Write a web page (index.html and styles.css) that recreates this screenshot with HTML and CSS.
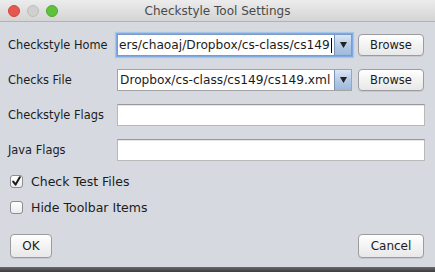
FILE: index.html
```html
<!DOCTYPE html>
<html>
<head>
<meta charset="utf-8">
<link rel="stylesheet" href="styles.css">
</head>
<body>
<div class="window">
  <div class="titlebar">
    <div class="lights">
      <span class="light red"></span>
      <span class="light gray"></span>
      <span class="light green"></span>
    </div>
    <div class="title">Checkstyle Tool Settings</div>
  </div>
  <div class="content">
    <div class="form">
      <div class="label">Checkstyle Home</div>
      <div class="combo focus">
        <div class="combo-text">ers/chaoaj/Dropbox/cs-class/cs149<span class="caret"></span></div>
        <div class="combo-arrow"><svg width="7" height="6" viewBox="0 0 7 6"><path d="M0 0 H7 L3.5 6 Z" fill="#222"/></svg></div>
      </div>
      <button class="btn browse">Browse</button>

      <div class="label">Checks File</div>
      <div class="combo">
        <div class="combo-text">Dropbox/cs-class/cs149/cs149.xml</div>
        <div class="combo-arrow"><svg width="7" height="6" viewBox="0 0 7 6"><path d="M0 0 H7 L3.5 6 Z" fill="#222"/></svg></div>
      </div>
      <button class="btn browse">Browse</button>

      <div class="label">Checkstyle Flags</div>
      <div class="field wide"></div>

      <div class="label">Java Flags</div>
      <div class="field wide"></div>
    </div>

    <div class="checks">
      <div class="check-row">
        <span class="box checked"><svg width="11" height="11" viewBox="0 0 11 11"><path d="M2.2 5.6 L4.6 8.6 L8.8 1.2" fill="none" stroke="#1a1a1a" stroke-width="2" stroke-linecap="round" stroke-linejoin="round"/></svg></span>
        <span class="check-text">Check Test Files</span>
      </div>
      <div class="check-row">
        <span class="box"></span>
        <span class="check-text">Hide Toolbar Items</span>
      </div>
    </div>

    <div class="actions">
      <button class="btn action ok">OK</button>
      <button class="btn action cancel">Cancel</button>
    </div>
  </div>
</div>
<div class="desk"></div>
</body>
</html>
```
FILE: styles.css
```css
html, body {
  margin: 0;
  padding: 0;
  background: #3c3c3e;
}
body {
  width: 435px;
  height: 272px;
  overflow: hidden;
  font-family: "DejaVu Sans", "Noto Sans", sans-serif;
  color: #1c1c1c;
}
.window {
  height: 267px;
  background: #d6d9e0;
  display: flex;
  flex-direction: column;
}
.titlebar {
  height: 21px;
  flex: none;
  background: linear-gradient(#ececec, #d4d4d4);
  border-bottom: 1px solid #b3b3b3;
  display: flex;
  align-items: center;
  position: relative;
}
.lights {
  display: flex;
  gap: 7px;
  padding-left: 8px;
}
.light {
  width: 12px;
  height: 12px;
  border-radius: 50%;
  box-sizing: border-box;
}
.light.red { background: #e5584f; border: 1px solid #d2463d; }
.light.gray { background: #d0d0d0; border: 1px solid #bdbdbd; }
.light.green { background: #5fc23c; border: 1px solid #4ea92d; }
.title {
  position: absolute;
  left: 0;
  right: 0;
  text-align: center;
  font-size: 12px;
  color: #4a4a4a;
  top: 4px;
}
.content {
  flex: 1;
  padding: 12px 10px 0 8px;
  display: flex;
  flex-direction: column;
}
.form {
  display: grid;
  grid-template-columns: 103px 235px 1fr;
  column-gap: 6px;
  row-gap: 13px;
  align-items: center;
}
.form > * { height: 22px; }
.label {
  font-size: 11.4px;
  display: flex;
  align-items: center;
  height: 22px;
}
.combo {
  display: flex;
  box-sizing: border-box;
  border: 1px solid #a4a4a4;
  background: #fff;
}
.combo.focus {
  box-shadow: 0 0 0 1px #7fa9df, 0 0 1px 2px #a8c6ec;
  border-color: #7b9bc8;
}
.combo-text {
  flex: 1;
  overflow: hidden;
  white-space: nowrap;
  font-size: 12.2px;
  line-height: 20px;
  padding-left: 1px;
  display: flex;
  align-items: center;
}
.combo:not(.focus) .combo-text { padding-left: 2px; }
.caret {
  display: inline-block;
  width: 1px;
  height: 15px;
  background: #000;
  margin-left: 1px;
}
.combo-arrow {
  width: 16px;
  flex: none;
  border-left: 1px solid #7d93b3;
  background: linear-gradient(#dbe6f4, #b5cbe6 50%, #9cb9de);
  display: flex;
  align-items: center;
  justify-content: center;
}
.btn {
  font-family: "DejaVu Sans", "Noto Sans", sans-serif;
  color: #1c1c1c;
  border: 1px solid #9c9c9c;
  border-radius: 4px;
  background: linear-gradient(#ffffff, #f3f3f3 50%, #e8e8e8);
  box-shadow: 0 1px 0 rgba(0,0,0,0.08);
  padding: 0;
  box-sizing: border-box;
}
.browse {
  width: 66px;
  font-size: 11.5px;
}
.field {
  box-sizing: border-box;
  background: #fff;
  border: 1px solid #b9b9b9;
  border-top-color: #999;
  box-shadow: inset 0 1px 0 #e6e6e6;
}
.wide { grid-column: 2 / 4; }
.checks {
  margin-top: 10px;
  display: flex;
  flex-direction: column;
  gap: 6px;
  padding-left: 2px;
}
.check-row {
  display: flex;
  align-items: center;
  height: 20px;
  gap: 8px;
}
.box {
  width: 13px;
  height: 13px;
  box-sizing: border-box;
  border: 1px solid #8a8d94;
  border-radius: 3px;
  background: linear-gradient(#ffffff, #ececef);
  display: flex;
  align-items: center;
  justify-content: center;
}
.check-text { font-size: 12.5px; }
.actions {
  margin-top: 17px;
  display: flex;
  justify-content: space-between;
  padding-left: 2px;
  padding-right: 1px;
}
.action {
  height: 24px;
  font-size: 12px;
}
.ok { width: 42px; }
.cancel { width: 66px; }
.desk {
  height: 5px;
  background: linear-gradient(#6a6a6a, #3c3c3e);
}
```
